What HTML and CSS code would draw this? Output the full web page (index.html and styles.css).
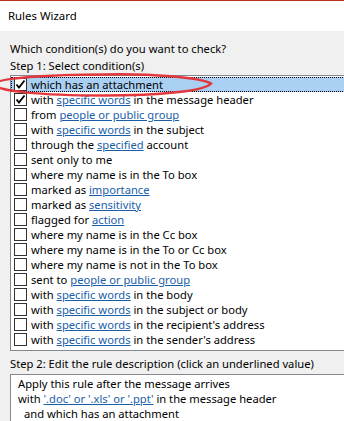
FILE: index.html
```html
<!DOCTYPE html>
<html>
<head>
<meta charset="utf-8">
<link rel="stylesheet" href="styles.css">
</head>
<body>
<div class="window">
  <div class="titlebar">Rules Wizard</div>
  <div class="content">
    <div class="label q">Which condition(s) do you want to check?</div>
    <div class="label step1">Step 1: Select condition(s)</div>
    <div class="list">
      <div class="row selected"><span class="cb checked"><svg viewBox="0 0 13 13" width="13" height="13"><path d="M2.5 6.5 L5 9.5 L10.5 2.5" fill="none" stroke="#000" stroke-width="1.8"/></svg></span><span class="txt">which has an attachment</span></div>
      <div class="row"><span class="cb checked"><svg viewBox="0 0 13 13" width="13" height="13"><path d="M2.5 6.5 L5 9.5 L10.5 2.5" fill="none" stroke="#000" stroke-width="1.8"/></svg></span><span class="txt">with <a>specific words</a> in the message header</span></div>
      <div class="row"><span class="cb"></span><span class="txt">from <a>people or public group</a></span></div>
      <div class="row"><span class="cb"></span><span class="txt">with <a>specific words</a> in the subject</span></div>
      <div class="row"><span class="cb"></span><span class="txt">through the <a>specified</a> account</span></div>
      <div class="row"><span class="cb"></span><span class="txt">sent only to me</span></div>
      <div class="row"><span class="cb"></span><span class="txt">where my name is in the To box</span></div>
      <div class="row"><span class="cb"></span><span class="txt">marked as <a>importance</a></span></div>
      <div class="row"><span class="cb"></span><span class="txt">marked as <a>sensitivity</a></span></div>
      <div class="row"><span class="cb"></span><span class="txt">flagged for <a>action</a></span></div>
      <div class="row"><span class="cb"></span><span class="txt">where my name is in the Cc box</span></div>
      <div class="row"><span class="cb"></span><span class="txt">where my name is in the To or Cc box</span></div>
      <div class="row"><span class="cb"></span><span class="txt">where my name is not in the To box</span></div>
      <div class="row"><span class="cb"></span><span class="txt">sent to <a>people or public group</a></span></div>
      <div class="row"><span class="cb"></span><span class="txt">with <a>specific words</a> in the body</span></div>
      <div class="row"><span class="cb"></span><span class="txt">with <a>specific words</a> in the subject or body</span></div>
      <div class="row"><span class="cb"></span><span class="txt">with <a>specific words</a> in the recipient's address</span></div>
      <div class="row"><span class="cb"></span><span class="txt">with <a>specific words</a> in the sender's address</span></div>
    </div>
    <div class="label step2">Step 2: Edit the rule description (click an underlined value)</div>
    <div class="desc">
      <div class="dline">Apply this rule after the message arrives</div>
      <div class="dline">with <a>'.doc' or '.xls' or '.ppt'</a> in the message header</div>
      <div class="dline indent">and which has an attachment</div>
    </div>
  </div>
  <svg class="ellipse" width="344" height="40" viewBox="0 0 344 40">
    <path d="M104 3.5 C 150 2.5, 200 6, 211 12.5 C 205 20, 160 24.5, 104 24.5 C 40 24.5, -6 20, -5 13 C -4 7, 50 3.5, 104 3.5 Z" fill="none" stroke="#e2373c" stroke-width="2.4"/>
  </svg>
</div>
</body>
</html>
```
FILE: styles.css
```css
html, body {
  margin: 0;
  padding: 0;
}
body {
  width: 344px;
  height: 421px;
  overflow: hidden;
  background: #f0f0f0;
  font-family: "Noto Sans", "Open Sans", sans-serif;
  font-size: 11.2px;
  color: #000;
}
.window {
  position: relative;
  height: 421px;
  overflow: hidden;
}
.titlebar {
  height: 30px;
  border-top: 1px solid #b8321f;
  background: #fff;
  padding-left: 8px;
  line-height: 29px;
  font-size: 11.4px;
}
.content {
  background: #f0f0f0;
  padding: 9px 0 0 10px;
}
.label {
  line-height: 17px;
  white-space: nowrap;
}
.list {
  margin-top: 1px;
  width: 360px;
  background: #fff;
  border: 1px solid #828790;
  border-right: none;
  padding: 1px 0 3px 0;
}
.row {
  display: flex;
  align-items: center;
  height: 15px;
  white-space: nowrap;
}
.row.selected {
  background: #a9cff2;
  outline: 1px dotted #000;
  outline-offset: -1px;
}
.cb {
  width: 11px;
  height: 11px;
  margin-left: 3px;
  border: 1px solid #333;
  background: #fff;
  flex: none;
  position: relative;
}
.cb svg {
  position: absolute;
  left: -1px;
  top: -1px;
}
.txt {
  margin-left: 4px;
  line-height: 15px;
}
a {
  color: #1a5ea8;
  text-decoration: underline;
  cursor: pointer;
}
.step2 {
  margin-top: 4px;
}
.desc {
  margin-top: 2px;
  width: 360px;
  height: 60px;
  background: #fff;
  border: 1px solid #828790;
  border-right: none;
  padding: 1px 0 0 7px;
}
.dline {
  line-height: 15px;
  white-space: nowrap;
}
.indent {
  padding-left: 6px;
}
.ellipse {
  position: absolute;
  left: 0;
  top: 71px;
}
```
